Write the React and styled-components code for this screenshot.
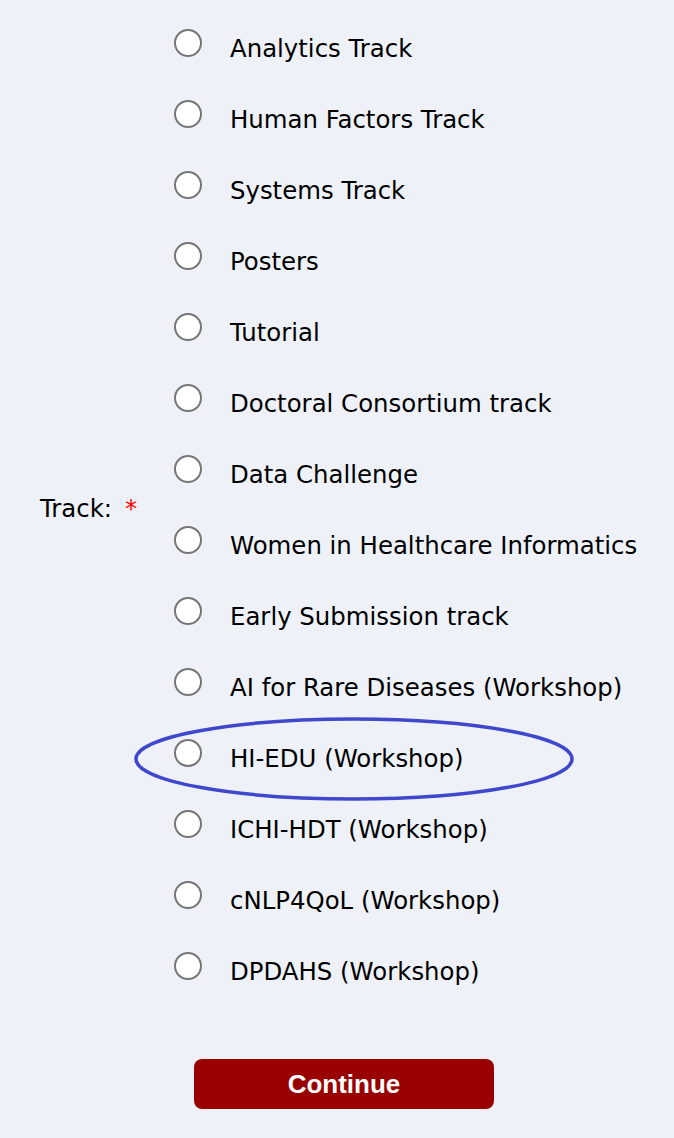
import React from "react";
import styled, { createGlobalStyle } from "styled-components";

const Global = createGlobalStyle`
  html, body { margin: 0; padding: 0; background: #eef2f8; }
  body { font-family: "DejaVu Sans", Verdana, sans-serif; color: #000; }
`;

const Page = styled.div`
  width: 674px;
  min-height: 1138px;
  background: #eef2f8;
  padding-top: 13px;
  box-sizing: border-box;
`;

const Field = styled.div`
  display: grid;
  grid-template-columns: 174px 1fr;
  align-items: center;
`;

const Label = styled.div`
  padding-left: 40px;
  margin-bottom: 4px;
  font-size: 24.4px;
  white-space: nowrap;
`;

const Star = styled.span`
  color: #ff0000;
  margin-left: 13px;
`;

const List = styled.div`
  display: flex;
  flex-direction: column;
`;

const Row = styled.label`
  position: relative;
  display: flex;
  align-items: center;
  height: 71px;
  font-size: 24.4px;
  white-space: nowrap;
`;

const Radio = styled.span`
  width: 24px;
  height: 24px;
  border: 2px solid #767676;
  border-radius: 50%;
  background: #fff;
  flex: none;
  margin-bottom: 11px;
  margin-right: 28px;
`;

const Circle = styled.svg`
  position: absolute;
  left: -40px;
  top: -6px;
  overflow: visible;
  pointer-events: none;
`;

const Actions = styled.div`
  display: flex;
  padding-left: 194px;
  margin-top: 52px;
`;

const Button = styled.button`
  width: 300px;
  height: 50px;
  border: none;
  border-radius: 8px;
  background: #990000;
  color: #fff;
  font-family: "Liberation Sans", Arial, sans-serif;
  font-weight: bold;
  font-size: 26px;
  cursor: pointer;
`;

const tracks = [
  "Analytics Track",
  "Human Factors Track",
  "Systems Track",
  "Posters",
  "Tutorial",
  "Doctoral Consortium track",
  "Data Challenge",
  "Women in Healthcare Informatics",
  "Early Submission track",
  "AI for Rare Diseases (Workshop)",
  "HI-EDU (Workshop)",
  "ICHI-HDT (Workshop)",
  "cNLP4QoL (Workshop)",
  "DPDAHS (Workshop)",
];

export default function App() {
  return (
    <Page>
      <Global />
      <Field>
        <Label>
          Track:<Star>*</Star>
        </Label>
        <List>
          {tracks.map((t) => (
            <Row key={t}>
              <Radio />
              {t}
              {t === "HI-EDU (Workshop)" && (
                <Circle width="440" height="84" viewBox="0 0 440 84">
                  <ellipse cx="220" cy="42" rx="218" ry="40" fill="none" stroke="#3f48cc" strokeWidth="3.5" />
                </Circle>
              )}
            </Row>
          ))}
        </List>
      </Field>
      <Actions>
        <Button>Continue</Button>
      </Actions>
    </Page>
  );
}
